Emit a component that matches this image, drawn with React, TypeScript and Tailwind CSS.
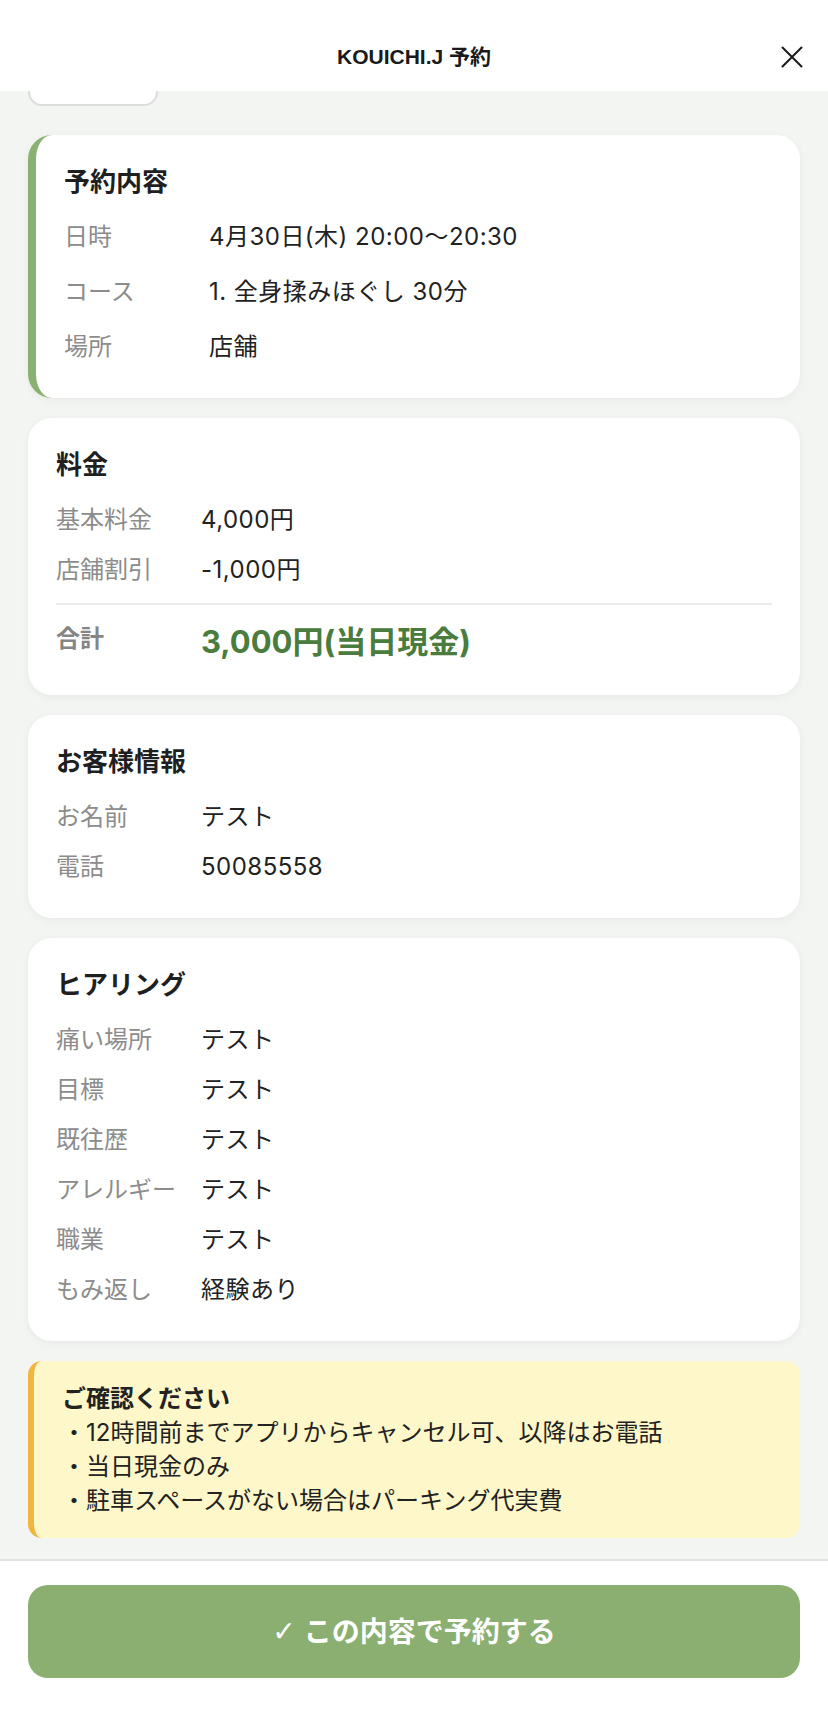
import React from 'react';

const FONT = '"Inter", "Noto Sans CJK JP", sans-serif';

interface Row {
  label: string;
  value: string;
}

const reservationRows: Row[] = [
  { label: '日時', value: '4月30日(木) 20:00〜20:30' },
  { label: 'コース', value: '1. 全身揉みほぐし 30分' },
  { label: '場所', value: '店舗' },
];

const priceRows: Row[] = [
  { label: '基本料金', value: '4,000円' },
  { label: '店舗割引', value: '-1,000円' },
];

const customerRows: Row[] = [
  { label: 'お名前', value: 'テスト' },
  { label: '電話', value: '50085558' },
];

const hearingRows: Row[] = [
  { label: '痛い場所', value: 'テスト' },
  { label: '目標', value: 'テスト' },
  { label: '既往歴', value: 'テスト' },
  { label: 'アレルギー', value: 'テスト' },
  { label: '職業', value: 'テスト' },
  { label: 'もみ返し', value: '経験あり' },
];

function InfoRow({ label, value }: Row) {
  return (
    <div className="flex items-start text-[24px] leading-[34px]">
      <span className="w-[145px] shrink-0 text-[#8c8c8c] whitespace-nowrap">{label}</span>
      <span className="text-[#222222] tracking-[0.02em]">{value}</span>
    </div>
  );
}

function CardTitle({ children }: { children: React.ReactNode }) {
  return (
    <h2 className="text-[26px] leading-[38px] font-bold text-[#1f1f1f] mb-[19px]">
      {children}
    </h2>
  );
}

export default function App() {
  return (
    <div
      className="h-[1718px] w-full flex flex-col bg-[#f3f5f3]"
      style={{ fontFamily: FONT }}
    >
      {/* Header */}
      <header className="h-[91px] shrink-0 bg-white grid grid-cols-[1fr_auto_1fr] items-end pb-[19px] relative z-10">
        <div />
        <h1
          className="text-[21px] leading-[30px] font-semibold text-[#1a1a1a]"
          style={{ fontFamily: '"Liberation Sans", "Noto Sans CJK JP", sans-serif' }}
        >
          KOUICHI.J 予約
        </h1>
        <div className="flex justify-end pr-[25px] pb-[4px]">
          <svg width="22" height="22" viewBox="0 0 22 22" fill="none" stroke="#1a1a1a" strokeWidth={2} strokeLinecap="round">
            <path d="M1.5 1.5L20.5 20.5M20.5 1.5L1.5 20.5" />
          </svg>
        </div>
      </header>

      {/* Scroll content */}
      <main className="flex-1 overflow-hidden px-[28px]">
        <div className="w-[130px] h-[50px] -mt-[35px] border-2 border-[#dddddd] rounded-[14px] bg-white" />

        <div className="mt-[29px] flex flex-col gap-[20px]">
          {/* 予約内容 */}
          <section className="bg-white rounded-[24px] border-l-[8px] border-[#8ab172] pl-[28px] pr-[28px] pt-[28px] pb-[34px] shadow-[0_2px_8px_rgba(0,0,0,0.05)]">
            <CardTitle>予約内容</CardTitle>
            <div className="flex flex-col gap-[21px]">
              {reservationRows.map((r) => (
                <InfoRow key={r.label} {...r} />
              ))}
            </div>
          </section>

          {/* 料金 */}
          <section className="bg-white rounded-[24px] px-[28px] pt-[28px] pb-[33px] shadow-[0_2px_8px_rgba(0,0,0,0.05)]">
            <CardTitle>料金</CardTitle>
            <div className="flex flex-col gap-[16px]">
              {priceRows.map((r) => (
                <InfoRow key={r.label} {...r} />
              ))}
            </div>
            <div className="mt-[16px] h-[2px] bg-[#ececec]" />
            <div className="mt-[17px] flex items-start">
              <span className="w-[145px] shrink-0 text-[24px] leading-[34px] font-semibold text-[#858585]">
                合計
              </span>
              <span className="text-[31px] leading-[40px] font-bold text-[#4a7c3d]">
                3,000円(当日現金)
              </span>
            </div>
          </section>

          {/* お客様情報 */}
          <section className="bg-white rounded-[24px] px-[28px] pt-[28px] pb-[34px] shadow-[0_2px_8px_rgba(0,0,0,0.05)]">
            <CardTitle>お客様情報</CardTitle>
            <div className="flex flex-col gap-[16px]">
              {customerRows.map((r) => (
                <InfoRow key={r.label} {...r} />
              ))}
            </div>
          </section>

          {/* ヒアリング */}
          <section className="bg-white rounded-[24px] px-[28px] pt-[28px] pb-[34px] shadow-[0_2px_8px_rgba(0,0,0,0.05)]">
            <CardTitle>ヒアリング</CardTitle>
            <div className="flex flex-col gap-[16px]">
              {hearingRows.map((r) => (
                <InfoRow key={r.label} {...r} />
              ))}
            </div>
          </section>

          {/* Notice */}
          <section className="bg-[#fdf7c9] rounded-[14px] border-l-[6px] border-[#f0b63f] pl-[28px] pr-[20px] pt-[21px] pb-[20px] text-[24px] leading-[34px] text-[#222222]">
            <p className="font-bold">ご確認ください</p>
            <p>・12時間前までアプリからキャンセル可、以降はお電話</p>
            <p>・当日現金のみ</p>
            <p>・駐車スペースがない場合はパーキング代実費</p>
          </section>
        </div>
      </main>

      {/* Footer */}
      <footer className="shrink-0 bg-white border-t-2 border-[#e2e2e2] px-[28px] pt-[24px] pb-[40px]">
        <button className="w-full h-[93px] rounded-[20px] bg-[#8aaf70] text-white text-[28px] font-bold flex items-center justify-center gap-[8px]">
          <span style={{ fontFamily: '"DejaVu Sans", sans-serif' }}>✓</span>
          <span>この内容で予約する</span>
        </button>
      </footer>
    </div>
  );
}
